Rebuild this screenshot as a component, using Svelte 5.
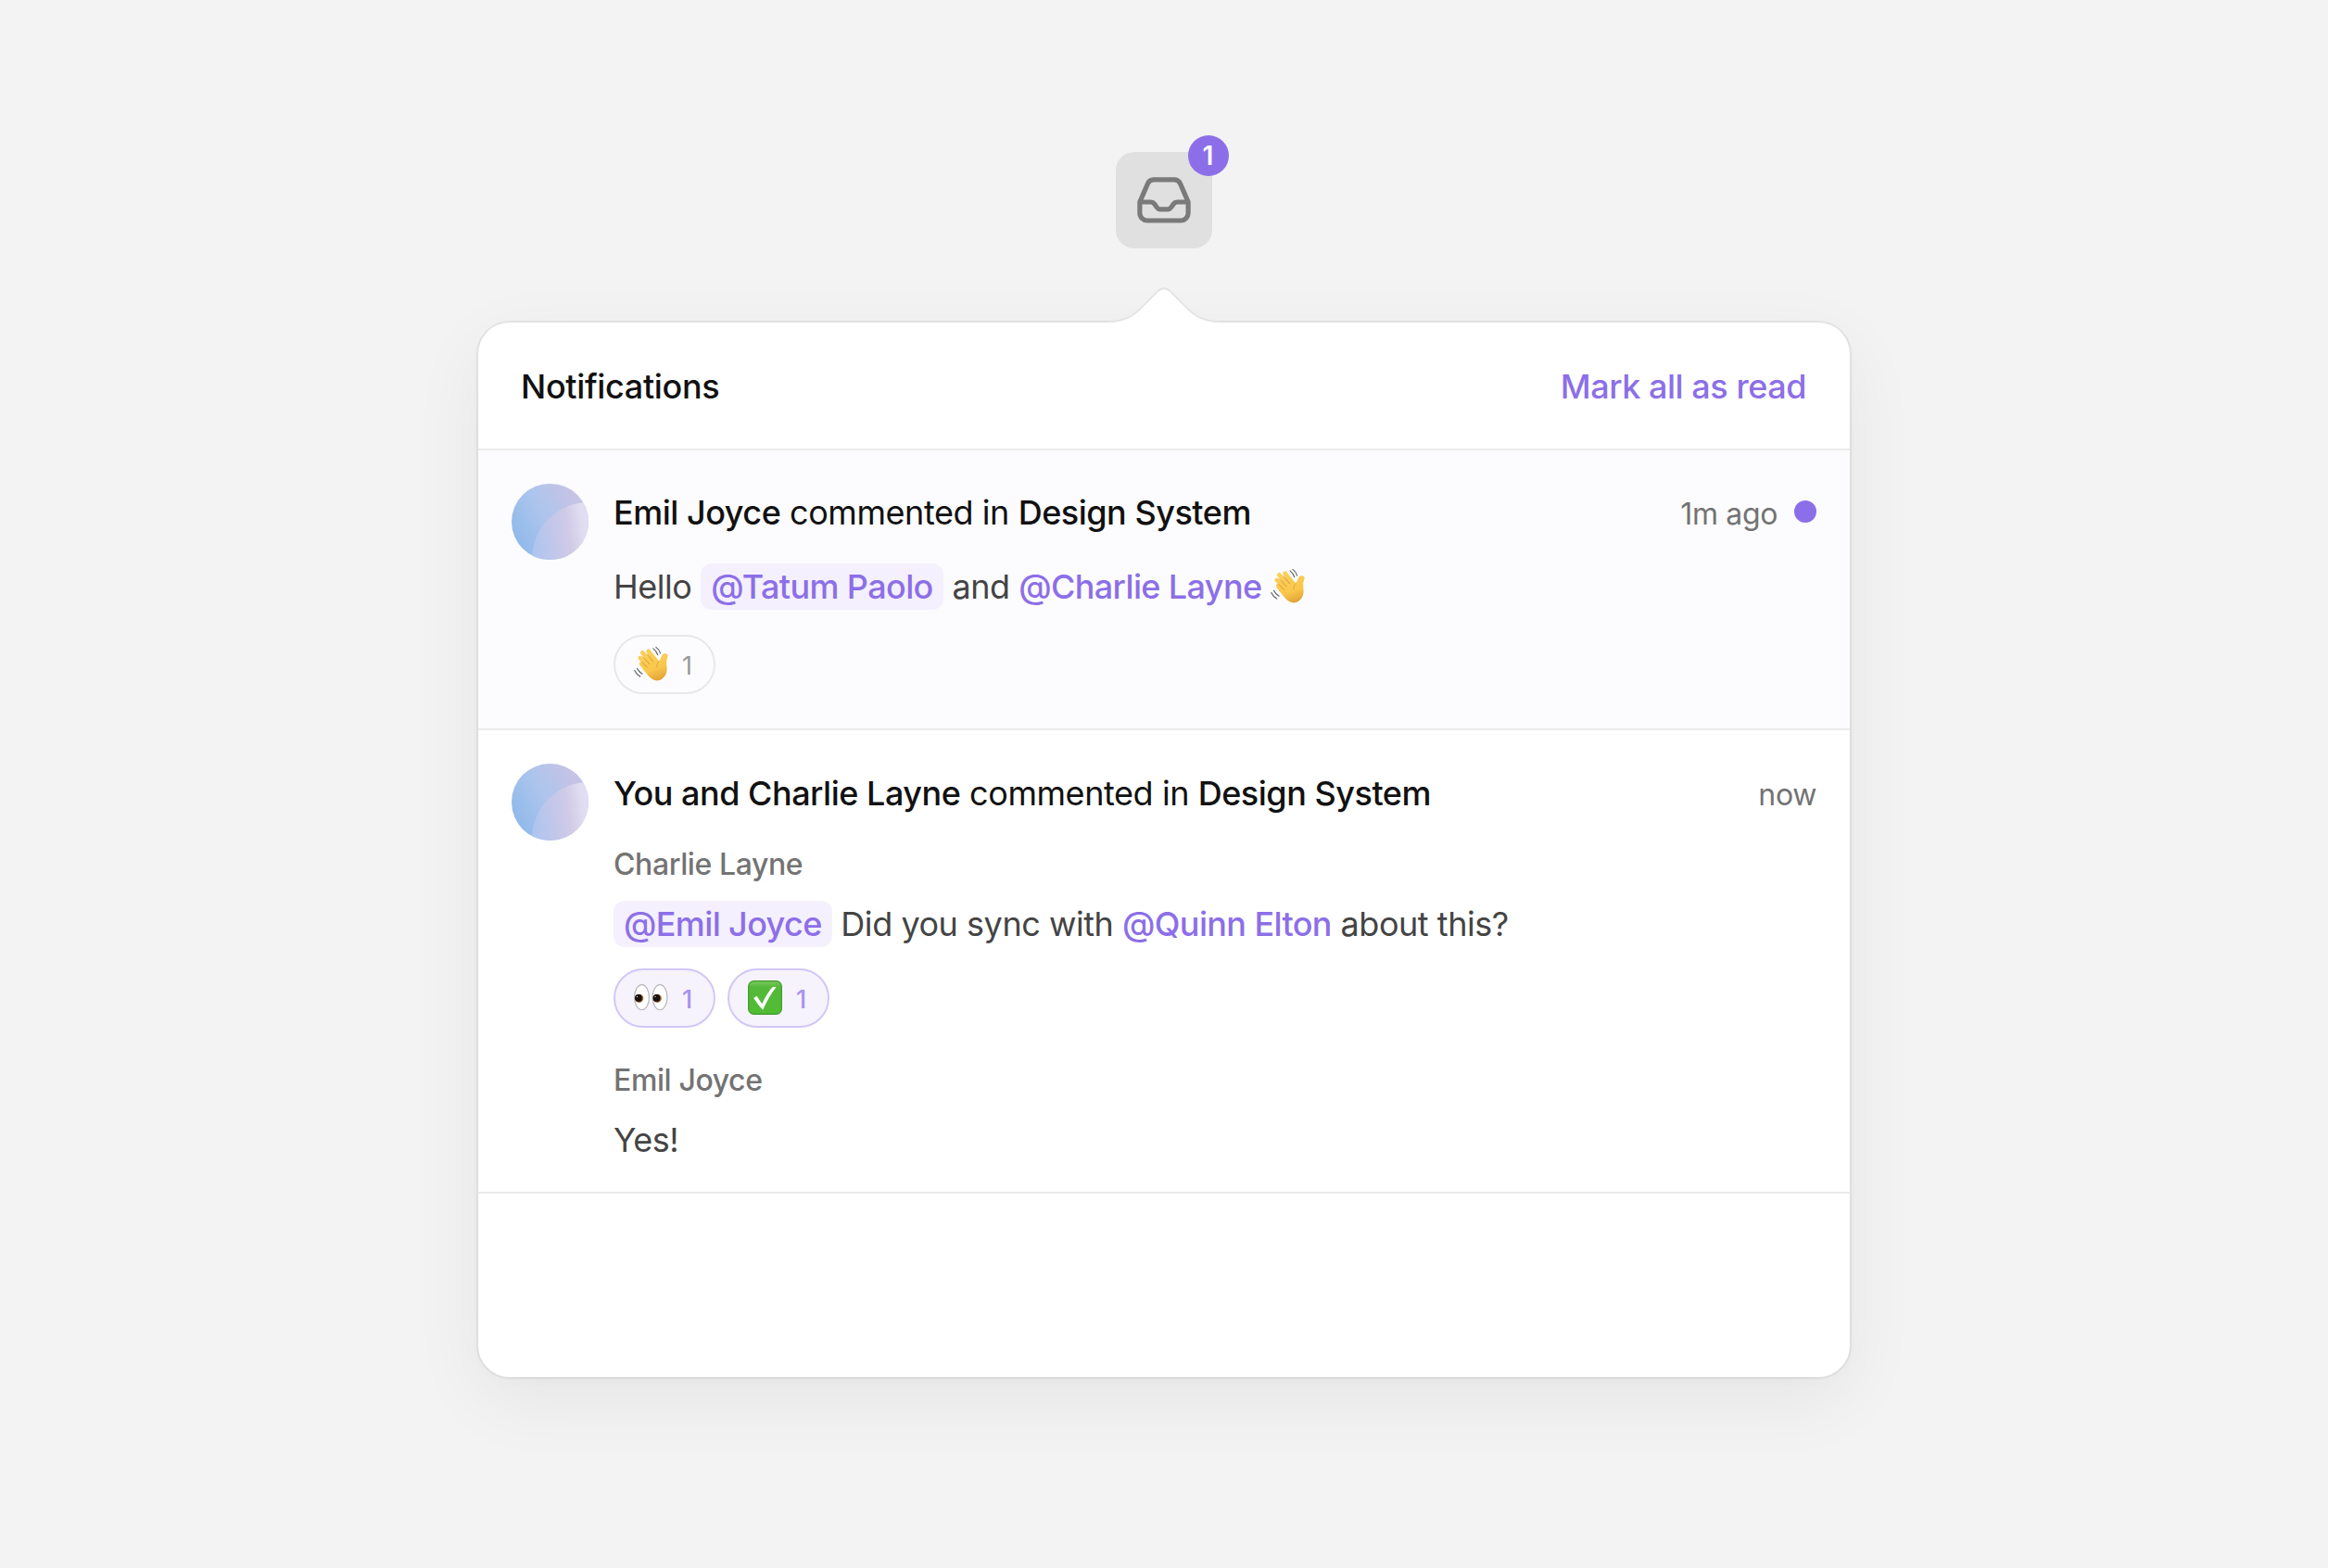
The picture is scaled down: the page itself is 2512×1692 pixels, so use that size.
<script lang="ts">
  type Part = { text: string; kind: 'plain' | 'strong' | 'mention' | 'self' | 'wave' };
  const p = (text: string, kind: Part['kind'] = 'plain'): Part => ({ text, kind });

  const firstTitle = [p('Emil Joyce', 'strong'), p(' commented in '), p('Design System', 'strong')];
  const secondTitle = [p('You and Charlie Layne', 'strong'), p(' commented in '), p('Design System', 'strong')];
  const hello = [p('Hello '), p('@Tatum Paolo', 'self'), p(' and '), p('@Charlie Layne', 'mention'), p(' '), p('', 'wave')];
  const question = [p('@Emil Joyce', 'self'), p(' Did you sync with '), p('@Quinn Elton', 'mention'), p(' about this?')];
</script>

{#snippet wave()}
  <svg class="emoji" viewBox="0 0 36 36" aria-label="waving hand">
    <defs>
      <linearGradient id="skin" gradientUnits="userSpaceOnUse" x1="12" y1="2" x2="25" y2="36">
        <stop offset="0" stop-color="#fcd15c" />
        <stop offset="0.65" stop-color="#f9c74c" />
        <stop offset="1" stop-color="#e2a136" />
      </linearGradient>
    </defs>
    <path d="M7 15.5 L20 7 L26.3 14.8 C28 13.4 28 11.4 29.2 9.4 C30.4 7.2 32.6 6.6 34.6 7.6 C36.2 8.5 35.6 10 35 11.6 C33.4 15.6 34.8 20 34.6 24.4 C34.3 29.2 31.4 33.6 27 35 C22.6 36.4 18.6 34.4 15.6 31 L9 23 Z" fill="url(#skin)" />
    <g fill="none" stroke="url(#skin)" stroke-width="4.6" stroke-linecap="round">
      <path d="M7.9 17.8 L15 25.4" /><path d="M6.6 11.6 L17 22" /><path d="M9 6.2 L20 18" /><path d="M15.2 4.6 L23.4 16" />
    </g>
    <g fill="none" stroke="#d4912c" stroke-width="0.9" stroke-linecap="round">
      <path d="M8.6 16.1 L14.2 21.7" /><path d="M9.4 10.6 L16.6 18.2" /><path d="M14 7.8 L20 15.4" />
      <path d="M26.3 15.2 C24.4 17.2 23.8 19.4 24.4 21.6" stroke-width="0.6" />
    </g>
    <g fill="none" stroke="#5c6064" stroke-width="1.1" stroke-linecap="round">
      <path d="M20.4 1.8 C22.6 3.6 24.2 5.8 25 8.4" /><path d="M23.2 0.4 C25.4 2 27 4.2 27.8 6.8" />
      <path d="M3.4 22.6 C4.6 25.1 6.4 27.1 8.8 28.5" /><path d="M0.8 24.8 C2 27.6 4 29.8 6.6 31.2" />
    </g>
  </svg>
{/snippet}

{#snippet eyes()}
  <svg class="emoji" viewBox="0 0 36 36" aria-label="eyes">
    {#each [0.2, 19.2] as x}
      <g transform="translate({x} 0)">
        <ellipse cx="8.1" cy="17.7" rx="7.7" ry="13.2" fill="#fff" stroke="#b5b5b8" stroke-width="1.1" />
        <circle cx="5.3" cy="18.8" r="4.5" fill="#a8662a" />
        <circle cx="4.6" cy="18.4" r="3.8" fill="#17100d" />
        <circle cx="3.2" cy="17" r="0.7" fill="#cfc8c3" />
      </g>
    {/each}
  </svg>
{/snippet}

{#snippet check()}
  <svg class="emoji" viewBox="0 0 36 36" aria-label="done">
    <defs>
      <linearGradient id="leaf" x1="0" y1="0" x2="0" y2="1">
        <stop offset="0" stop-color="#7ccb62" /><stop offset="0.18" stop-color="#54b83a" /><stop offset="1" stop-color="#50bd33" />
      </linearGradient>
    </defs>
    <rect x="0.6" y="0.6" width="34.8" height="34.8" rx="5.6" fill="url(#leaf)" stroke="#3f9a2b" stroke-width="1.1" />
    <path d="M6 18.4 L9.4 16.4 L14.8 24.6 C18 17.6 21.8 11.4 26 6.8 H29.8 C24.4 13.6 19.8 21.6 15.7 31 C12 27 9 22.8 6 18.4 Z" fill="#fff" />
  </svg>
{/snippet}

{#snippet line(parts: Part[])}{#each parts as part}{#if part.kind === 'wave'}{@render wave()}{:else}<span class={part.kind}>{part.text}</span>{/if}{/each}{/snippet}

<main>
  <button class="inbox" aria-label="Inbox">
    <svg viewBox="0 0 58 50" fill="none" stroke="#7a7a7a" stroke-width="5.2" stroke-linejoin="round">
      <path d="M2.9 27 V39 A8 8 0 0 0 10.9 47 H47.1 A8 8 0 0 0 55.1 39 V27 L46.6 7.2 A7 7 0 0 0 40.2 2.9 H17.8 A7 7 0 0 0 11.4 7.2 Z" />
      <path d="M2.9 27 H14.8 A4.6 4.6 0 0 1 18.5 28.9 L21.5 33 A4.6 4.6 0 0 0 25.2 34.9 H32.8 A4.6 4.6 0 0 0 36.5 33 L39.5 28.9 A4.6 4.6 0 0 1 43.2 27 H55.1" />
    </svg>
    <span class="badge">1</span>
  </button>

  <section class="card">
    <svg class="arrow" viewBox="0 0 124 40">
      <path d="M2 37 H4 C17 37 27 32.4 36 23.6 L55 4.6 C59.4 0.1 64.6 0.1 69 4.6 L88 23.6 C97 32.4 107 37 120 37 H122 V40 H2 Z" fill="#fff" />
      <path d="M2 37 H4 C17 37 27 32.4 36 23.6 L55 4.6 C59.4 0.1 64.6 0.1 69 4.6 L88 23.6 C97 32.4 107 37 120 37 H122" fill="none" stroke="#e4e4e4" stroke-width="2" />
    </svg>
    <header>
      <h1>Notifications</h1>
      <a class="action" href="#read">Mark all as read</a>
    </header>

    <article class="item unread">
      <div class="avatar"></div>
      <div class="content">
        <div class="head">
          <p class="title">{@render line(firstTitle)}</p>
          <span class="time">1m ago</span>
          <i class="dot"></i>
        </div>
        <p class="body first">{@render line(hello)}</p>
        <div class="chips"><span class="chip">{@render wave()}<b>1</b></span></div>
      </div>
    </article>

    <article class="item thread">
      <div class="avatar"></div>
      <div class="content">
        <div class="head">
          <p class="title">{@render line(secondTitle)}</p>
          <span class="time">now</span>
        </div>
        <p class="author">Charlie Layne</p>
        <p class="body">{@render line(question)}</p>
        <div class="chips">
          <span class="chip own">{@render eyes()}<b>1</b></span>
          <span class="chip own">{@render check()}<b>1</b></span>
        </div>
        <p class="author second">Emil Joyce</p>
        <p class="body">Yes!</p>
      </div>
    </article>
  </section>
</main>

<style>
  :global(body) { background: #f3f3f3; }
  main {
    box-sizing: border-box;
    width: 2512px;
    height: 1692px;
    padding-top: 164px;
    display: flex;
    flex-direction: column;
    align-items: center;
    overflow: hidden;
    background: #f3f3f3;
    color: #111;
    font-family: Inter, "Liberation Sans", sans-serif;
    font-size: 36px;
    line-height: 50px;
    letter-spacing: -0.4px;
    -webkit-font-smoothing: antialiased;
  }
  h1, p { margin: 0; font: inherit; white-space: pre; }
  .inbox {
    position: relative;
    width: 104px;
    height: 104px;
    padding: 0;
    display: grid;
    place-items: center;
    border: 0;
    border-radius: 20px;
    background: #e0e0e0;
    font: inherit;
  }
  .inbox svg { width: 58px; height: 50px; }
  .badge {
    position: absolute;
    top: -18px;
    right: -18px;
    width: 44px;
    height: 44px;
    border-radius: 50%;
    background: #8c6fe8;
    color: #fff;
    font-size: 28px;
    font-weight: 600;
    line-height: 44px;
    text-align: center;
    text-indent: -1px;
    letter-spacing: 0;
  }
  .card {
    position: relative;
    width: 1480px;
    height: 1138px;
    margin-top: 80px;
    border-radius: 34px;
    background: #fff;
    box-shadow: 0 0 0 2px rgba(0, 0, 0, 0.055), 0 4px 16px rgba(0, 0, 0, 0.015), 0 24px 80px rgba(0, 0, 0, 0.06);
  }
  .arrow { position: absolute; left: 678px; top: -38px; width: 124px; height: 40px; }
  header {
    box-sizing: border-box;
    height: 138px;
    padding: 2px 47px 0 46px;
    display: flex;
    justify-content: space-between;
    align-items: center;
    border-bottom: 2px solid #ebebeb;
    font-weight: 500;
    letter-spacing: -0.35px;
  }
  .action { color: #8c6fe8; text-decoration: none; letter-spacing: -0.46px; }
  .item {
    display: flex;
    gap: 27px;
    padding: 36px 36px 0;
    border-bottom: 2px solid #ebebeb;
  }
  .unread { height: 264px; background: #fcfcfe; }
  .thread { height: 462px; }
  .avatar {
    position: relative;
    flex: none;
    width: 82.5px;
    height: 82.5px;
    margin: -0.5px 0.25px 0;
    border-radius: 50%;
    overflow: hidden;
    background: linear-gradient(62deg, #8db8ea 8%, #adc5ed 48%, #c3c3e6 78%, #cbc4e6 100%);
  }
  .thread .avatar { margin-top: 0.25px; }
  .avatar::after {
    content: "";
    position: absolute;
    left: 22px;
    top: 20px;
    width: 122px;
    height: 122px;
    border-radius: 50%;
    background: linear-gradient(82deg, #a6c4ee 0, #b4c6ed 14%, #c5c7e9 27%, #d0cae8 37%, #e2def1 50%);
  }
  .content { flex: 1; }
  .head { display: flex; align-items: center; height: 50px; margin-top: 6px; }
  .thread .head { margin-top: 7px; }
  .title { flex: 1; letter-spacing: -0.43px; }
  .strong { font-weight: 500; letter-spacing: -0.48px; }
  .time { color: #737373; font-size: 32px; margin-top: 3px; letter-spacing: -0.35px; }
  .dot { width: 24px; height: 24px; margin: -2px 0 0 18px; border-radius: 50%; background: #8c6fe8; }
  .body { color: #444; height: 50px; letter-spacing: -0.46px; }
  .first { margin-top: 30px; }
  .mention, .self { color: #8c6fe8; font-weight: 500; letter-spacing: -0.62px; }
  .self { display: inline-block; padding: 0 11px; border-radius: 12px; background: #f4f0fd; }
  .emoji { width: 37px; height: 37px; overflow: visible; }
  .body .emoji { vertical-align: -5px; }
  .chips { display: flex; gap: 13px; margin-top: 27px; }
  .thread .chips { margin-top: 23px; }
  .chip {
    box-sizing: border-box;
    width: 110px;
    height: 64px;
    padding-left: 20px;
    display: flex;
    align-items: center;
    gap: 15px;
    border: 2px solid #e8e8ea;
    border-radius: 32px;
  }
  .chip .emoji { flex: none; margin-top: -1px; }
  .chip b { font-size: 27px; font-weight: 400; line-height: 32px; color: #999; margin-top: 3px; }
  .own { border-color: #d2c7f7; background: #f6f3fd; }
  .own b { color: #aa92f0; font-weight: 500; }
  .author { color: #737373; font-size: 32px; font-weight: 500; line-height: 44px; margin-top: 30px; }
  .author + .body { margin-top: 17px; }
  .second { margin-top: 35px; }
</style>
